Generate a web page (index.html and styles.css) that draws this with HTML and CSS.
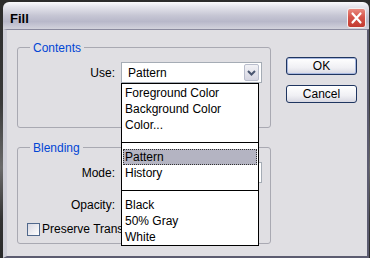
FILE: index.html
```html
<!DOCTYPE html>
<html lang="en">
<head>
    <meta charset="UTF-8">
    <title>Fill</title>
    <link rel="stylesheet" href="styles.css">
</head>
<body>
    <div class="window">
        <div class="titlebar">
            <span class="title">Fill</span>
            <span class="close">
                <svg width="19" height="20" viewBox="0 0 19 20">
                    <path d="M5.5 5.5 L13.5 14.5 M13.5 5.5 L5.5 14.5" stroke="#fff" stroke-width="2.2" stroke-linecap="round"/>
                </svg>
            </span>
        </div>
        <div class="client">
            <div class="groups">
                <fieldset class="group contents">
                    <legend>Contents</legend>
                    <div class="row first">
                        <span class="label">Use:</span>
                        <div class="combo">
                            <span class="combo-text">Pattern</span>
                            <span class="combo-btn">
                                <svg width="9" height="6" viewBox="0 0 9 6"><path d="M1 1 L4.5 4.5 L8 1" fill="none" stroke="#4a5670" stroke-width="2"/></svg>
                            </span>
                            <ul class="dropdown">
                                <li>Foreground Color</li>
                                <li>Background Color</li>
                                <li>Color...</li>
                                <li class="sep"></li>
                                <li class="selected">Pattern</li>
                                <li>History</li>
                                <li class="sep"></li>
                                <li>Black</li>
                                <li>50% Gray</li>
                                <li>White</li>
                            </ul>
                        </div>
                    </div>
                </fieldset>
                <fieldset class="group blending">
                    <legend>Blending</legend>
                    <div class="row first">
                        <span class="label">Mode:</span>
                        <div class="combo"></div>
                    </div>
                    <div class="row second">
                        <span class="label">Opacity:</span>
                        <div class="field"></div>
                    </div>
                    <div class="check">
                        <span class="box"></span>
                        <span>Preserve Transparency</span>
                    </div>
                </fieldset>
            </div>
            <div class="buttons">
                <button class="btn default">OK</button>
                <button class="btn">Cancel</button>
            </div>
        </div>
    </div>
</body>
</html>
```

FILE: styles.css
```css
body {
    margin: 0;
    background: linear-gradient(to bottom, #2c2c2c 0%, #3a3a3a 40%, #6a6a6a 65%, #333 85%, #2a2a2a 100%);
    font-family: "Liberation Sans", Arial, sans-serif;
    font-size: 12px;
    color: #000;
    height: 258px;
    overflow: hidden;
}
.window {
    margin: 2px 0 0 3px;
    width: 366px;
}
.titlebar {
    height: 27px;
    box-sizing: border-box;
    border-radius: 6px 6px 0 0;
    background: linear-gradient(to bottom, #fbfbfd 0%, #e4e4ec 18%, #c6c6d4 50%, #b8b8ca 72%, #d2d2dc 100%);
    display: flex;
    align-items: center;
    justify-content: space-between;
    padding: 0 3px 0 7px;
}
.title {
    font-weight: bold;
    font-size: 13px;
    padding-top: 5px;
}
.close {
    width: 19px;
    height: 20px;
    margin-top: 4px;
    border-radius: 3px;
    border: 1px solid #f4f0f0;
    box-sizing: border-box;
    background: linear-gradient(to bottom, #e98a80, #d5544a 45%, #c23a30);
    display: flex;
}
.close svg {
    margin: -1px;
}
.client {
    height: 229px;
    box-sizing: border-box;
    background: #e0dfe3;
    border-top: 1px solid #8a8a9e;
    border-left: 4px solid #cfcfd8;
    border-right: 2px solid #5c5c70;
    border-bottom: 2px solid #5c5c70;
    display: flex;
    padding: 10px 0 0 10px;
}
.groups {
    width: 254px;
}
.group {
    margin: 0;
    padding: 0;
    border: 1px solid #a9a9b2;
    border-radius: 3px;
    box-sizing: border-box;
    min-width: 0;
}
.group legend {
    margin-left: 12px;
    padding: 1px 3px 0;
    line-height: 14px;
    color: #0046d5;
}
.contents {
    height: 88px;
}
.blending {
    height: 104px;
    margin-top: 12px;
}
.row {
    display: flex;
    align-items: center;
}
.row.first {
    margin-top: 7px;
}
.row.second {
    margin-top: 11px;
}
.label {
    width: 97px;
    text-align: right;
    margin-right: 6px;
}
.combo {
    position: relative;
    width: 141px;
    height: 21px;
    box-sizing: border-box;
    border: 1px solid #a5acb5;
    background: #fff;
    display: flex;
    align-items: center;
    justify-content: space-between;
    padding: 0 2px 0 6px;
}
.combo-btn {
    width: 15px;
    height: 17px;
    box-sizing: border-box;
    border: 1px solid #b9bdcc;
    border-radius: 2px;
    background: linear-gradient(to bottom, #f2f2f6, #d6d6e2);
    display: flex;
    align-items: center;
    justify-content: center;
}
.dropdown {
    position: absolute;
    left: -1px;
    top: 20px;
    width: 138px;
    box-sizing: border-box;
    margin: 0;
    padding: 1px 1px 0 1px;
    list-style: none;
    background: #fff;
    border: 1px solid #000;
    z-index: 5;
}
.dropdown li {
    height: 16px;
    line-height: 17px;
    padding-left: 2px;
}
.dropdown li.sep {
    height: 9px;
    margin: 0 -1px 6px;
    border-bottom: 1px solid #000;
}
.dropdown li.selected {
    background: #b4b4c2;
    outline: 1px dotted #333;
    outline-offset: -1px;
}
.field {
    width: 40px;
    height: 21px;
    box-sizing: border-box;
    border: 1px solid #a5acb5;
    background: #fff;
}
.check {
    display: flex;
    align-items: center;
    margin: 6px 0 0 9px;
    height: 16px;
    white-space: nowrap;
}
.box {
    width: 13px;
    height: 13px;
    box-sizing: border-box;
    border: 1px solid #50688c;
    background: linear-gradient(135deg, #d8d8e2, #fff);
    margin-right: 2px;
}
.buttons {
    display: flex;
    flex-direction: column;
    margin-left: 15px;
    padding-top: 17px;
}
.btn {
    width: 71px;
    height: 18px;
    margin: 0 0 10px 0;
    padding: 0;
    border: 1px solid #1f3560;
    border-radius: 3px;
    background: linear-gradient(to bottom, #ffffff, #f0f0f4 60%, #d8d8e2);
    font-family: "Liberation Sans", Arial, sans-serif;
    font-size: 12px;
    color: #000;
}
.btn.default {
    box-shadow: inset 0 0 0 1px #a8b8e0;
}
```
